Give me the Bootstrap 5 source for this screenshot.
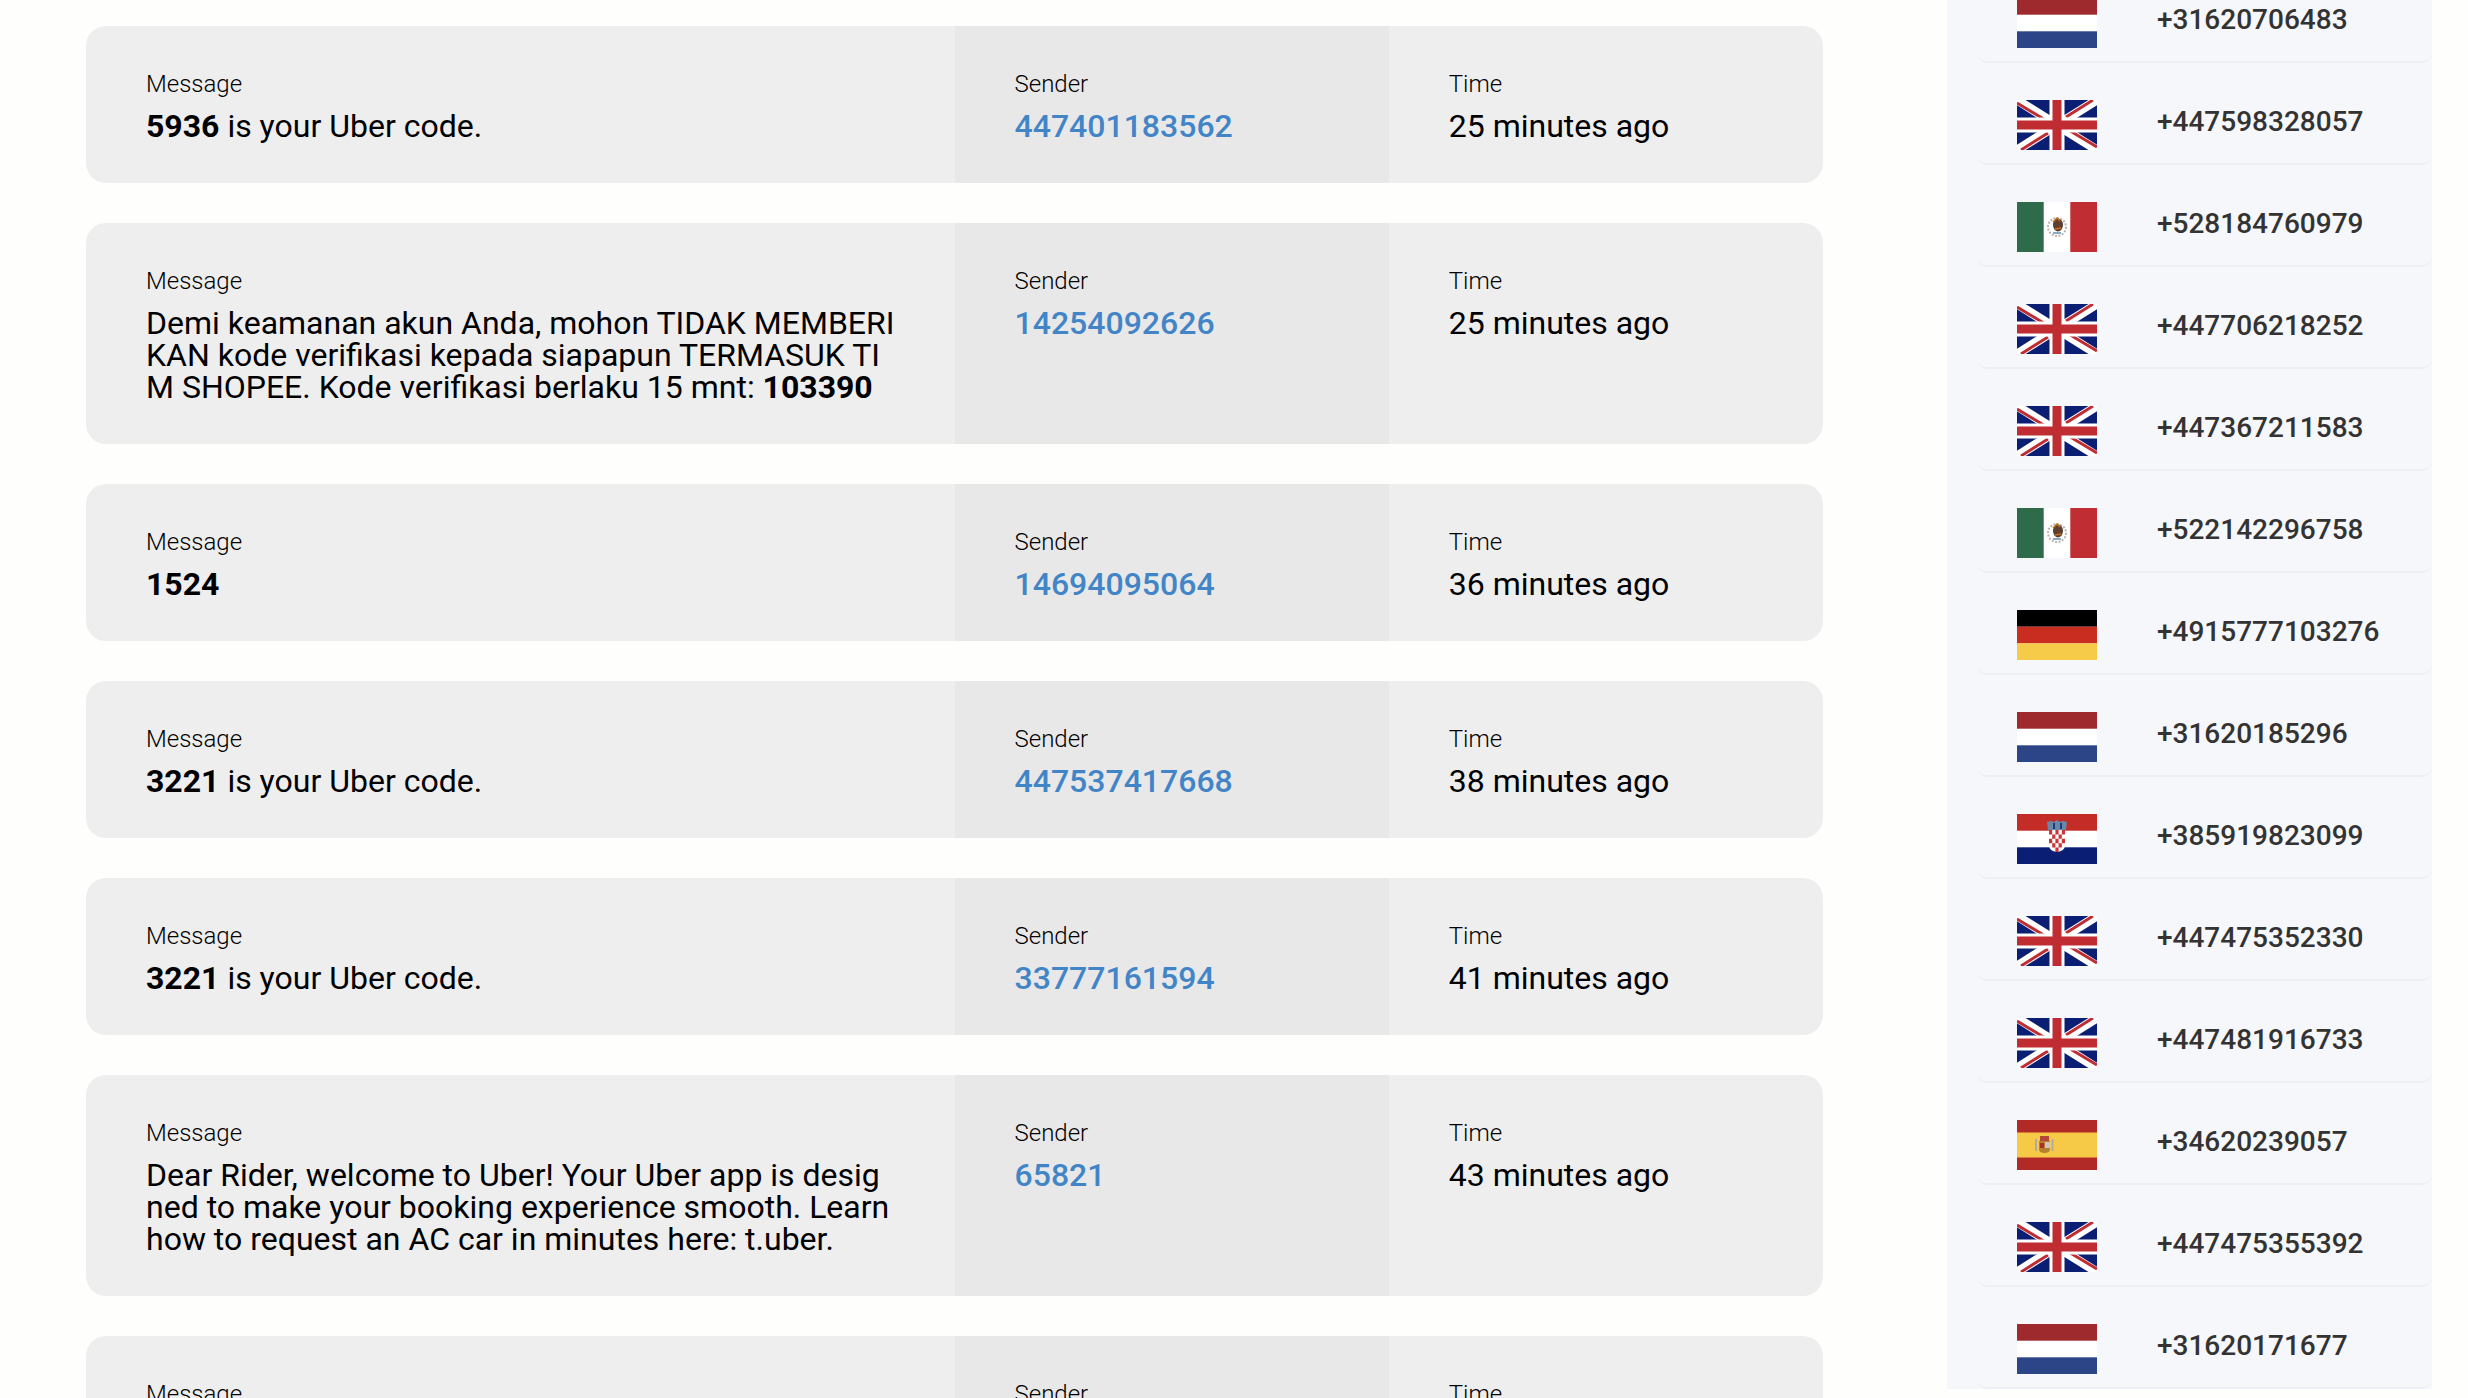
<!DOCTYPE html>
<html lang="en">
  <head>
    <meta charset="UTF-8" />
    <meta name="viewport" content="width=device-width, initial-scale=1.0" />
    <title>Messages</title>
    <link href="https://cdn.jsdelivr.net/npm/bootstrap@5.3.2/dist/css/bootstrap.min.css" rel="stylesheet" />
    <style>
      body { background: #fefefd; font-family: Roboto, "Liberation Sans", sans-serif; color: #000; }
      .page-wrap { height: 100vh; }
      .sms-col { width: 1947px; padding: 26px 124px 0 86px; }
      .sms-item { margin-bottom: 40px; background: #eeeeef; border-radius: 20px; }
      .sms-cell { padding: 40px 60px 41px; }
      .sms-sender { background: #e8e8e9; }
      .sms-label { font-size: 24px; line-height: 36px; font-weight: 300; margin-bottom: 8px; }
      .sms-value { font-size: 32px; line-height: 32px; word-break: break-all; }
      .sms-value b { font-weight: 700; }
      .sms-value a { color: #4285c7; font-weight: 500; text-decoration: none; }
      .num-panel { width: 485px; height: 1389px; background: #f6f7fb; padding-left: 30px; }
      .num-row { flex: 0 0 102px; padding: 37px 0 0 40px; border-bottom: 2px solid #eeeff4; border-radius: 0 0 10px 10px; }
      .num-row svg { width: 80px; height: 50px; flex: none; display: block; }
      .num-row a { margin-left: 60px; font-size: 28px; line-height: 44px; font-weight: 500; color: #333; text-decoration: none; }
    </style>
  </head>
  <body>
    <svg width="0" height="0" class="position-absolute">
      <defs>
        <symbol id="flag-nl" viewBox="0 0 80 50">
          <rect width="80" height="50" fill="#fff" />
          <rect width="80" height="16.7" fill="#9f2a2d" />
          <rect y="33.3" width="80" height="16.7" fill="#2b4587" />
        </symbol>
        <symbol id="flag-uk" viewBox="0 0 80 50">
          <rect width="80" height="50" fill="#0a1f73" />
          <path d="M0 0L80 50M80 0L0 50" stroke="#fff" stroke-width="9" />
          <path d="M0 3L30 21M76 0L49 17M80 47L50 29M4 50L31 33" stroke="#bf2d33" stroke-width="3" />
          <path d="M40 0V50M0 25H80" stroke="#fff" stroke-width="15" />
          <path d="M40 0V50M0 25H80" stroke="#bf2d33" stroke-width="9" />
        </symbol>
        <symbol id="flag-mx" viewBox="0 0 80 50">
          <rect width="80" height="50" fill="#fff" />
          <rect width="26.7" height="50" fill="#2e6b4b" />
          <rect x="53.3" width="26.7" height="50" fill="#c02d32" />
          <circle cx="40" cy="25" r="9" fill="none" stroke="#b9b5b0" stroke-width="2" stroke-dasharray="2 1.5" />
          <ellipse cx="41" cy="23" rx="5" ry="6.5" fill="#5d4030" />
          <path d="M36 20l4-4 3 3M38 27l6-1" stroke="#c8701e" stroke-width="1.5" fill="none" />
          <path d="M36 31h8" stroke="#5f8fb0" stroke-width="1.5" />
        </symbol>
        <symbol id="flag-de" viewBox="0 0 80 50">
          <rect width="80" height="16.7" fill="#000" />
          <rect y="16.7" width="80" height="16.7" fill="#c82d20" />
          <rect y="33.3" width="80" height="16.7" fill="#f6cb49" />
        </symbol>
        <symbol id="flag-hr" viewBox="0 0 80 50">
          <rect width="80" height="50" fill="#fff" />
          <rect width="80" height="16.7" fill="#c42d27" />
          <rect y="33.3" width="80" height="16.7" fill="#0a1f73" />
          <path d="M30 8l4-1 3 1 3-2 3 2 3-1 4 1-1 8H31z" fill="#6b87a8" />
          <path d="M36 9h2v6h-2zM43 9h2v6h-2z" fill="#1c3a80" />
          <path d="M32 16h16v15q0 6-8 7q-8-1-8-7z" fill="#fff" />
          <path d="M32 16h3.2v4.4H32zM38.4 16h3.2v4.4h-3.2zM44.8 16H48v4.4h-3.2zM35.2 20.4h3.2v4.4h-3.2zM41.6 20.4h3.2v4.4h-3.2zM32 24.8h3.2v4.4H32zM38.4 24.8h3.2v4.4h-3.2zM44.8 24.8H48v4.4h-3.2zM35.2 29.2h3.2v4.4h-3.2zM41.6 29.2h3.2v4.4h-3.2zM38.4 33.6h3.2V38h-3.2z" fill="#c9353a" />
        </symbol>
        <symbol id="flag-es" viewBox="0 0 80 50">
          <rect width="80" height="50" fill="#b22a28" />
          <rect y="12.5" width="80" height="25" fill="#f6ca46" />
          <path d="M22 21h11v8q0 4-5.500 4q-5.500 0-5.500-4z" fill="#b5812e" />
          <path d="M23 16h9v5h-9z" fill="#b5463a" />
          <path d="M28 22h5v6h-5z" fill="#c9c5c8" />
          <path d="M23 23h4v5h-4z" fill="#a8312c" />
          <path d="M19 19v12M35.500 19v12" stroke="#b0a9a8" stroke-width="2" />
        </symbol>
      </defs>
    </svg>

    <div class="page-wrap d-flex align-items-start overflow-hidden">
      <main class="sms-col flex-shrink-0">
        <div class="row g-0 sms-item overflow-hidden">
          <div class="col-6 sms-cell"><div class="sms-label">Message</div><div class="sms-value"><b>5936</b> is your Uber code.</div></div>
          <div class="col-3 sms-cell sms-sender"><div class="sms-label">Sender</div><div class="sms-value"><a href="#">447401183562</a></div></div>
          <div class="col-3 sms-cell"><div class="sms-label">Time</div><div class="sms-value">25 minutes ago</div></div>
        </div>
        <div class="row g-0 sms-item overflow-hidden">
          <div class="col-6 sms-cell"><div class="sms-label">Message</div><div class="sms-value">Demi keamanan akun Anda, mohon TIDAK MEMBERIKAN kode verifikasi kepada siapapun TERMASUK TIM SHOPEE. Kode verifikasi berlaku 15 mnt: <b>103390</b></div></div>
          <div class="col-3 sms-cell sms-sender"><div class="sms-label">Sender</div><div class="sms-value"><a href="#">14254092626</a></div></div>
          <div class="col-3 sms-cell"><div class="sms-label">Time</div><div class="sms-value">25 minutes ago</div></div>
        </div>
        <div class="row g-0 sms-item overflow-hidden">
          <div class="col-6 sms-cell"><div class="sms-label">Message</div><div class="sms-value"><b>1524</b></div></div>
          <div class="col-3 sms-cell sms-sender"><div class="sms-label">Sender</div><div class="sms-value"><a href="#">14694095064</a></div></div>
          <div class="col-3 sms-cell"><div class="sms-label">Time</div><div class="sms-value">36 minutes ago</div></div>
        </div>
        <div class="row g-0 sms-item overflow-hidden">
          <div class="col-6 sms-cell"><div class="sms-label">Message</div><div class="sms-value"><b>3221</b> is your Uber code.</div></div>
          <div class="col-3 sms-cell sms-sender"><div class="sms-label">Sender</div><div class="sms-value"><a href="#">447537417668</a></div></div>
          <div class="col-3 sms-cell"><div class="sms-label">Time</div><div class="sms-value">38 minutes ago</div></div>
        </div>
        <div class="row g-0 sms-item overflow-hidden">
          <div class="col-6 sms-cell"><div class="sms-label">Message</div><div class="sms-value"><b>3221</b> is your Uber code.</div></div>
          <div class="col-3 sms-cell sms-sender"><div class="sms-label">Sender</div><div class="sms-value"><a href="#">33777161594</a></div></div>
          <div class="col-3 sms-cell"><div class="sms-label">Time</div><div class="sms-value">41 minutes ago</div></div>
        </div>
        <div class="row g-0 sms-item overflow-hidden">
          <div class="col-6 sms-cell"><div class="sms-label">Message</div><div class="sms-value">Dear Rider, welcome to Uber! Your Uber app is designed to make your booking experience smooth. Learn how to request an AC car in minutes here: t.uber.</div></div>
          <div class="col-3 sms-cell sms-sender"><div class="sms-label">Sender</div><div class="sms-value"><a href="#">65821</a></div></div>
          <div class="col-3 sms-cell"><div class="sms-label">Time</div><div class="sms-value">43 minutes ago</div></div>
        </div>
        <div class="row g-0 sms-item overflow-hidden">
          <div class="col-6 sms-cell"><div class="sms-label">Message</div></div>
          <div class="col-3 sms-cell sms-sender"><div class="sms-label">Sender</div></div>
          <div class="col-3 sms-cell"><div class="sms-label">Time</div></div>
        </div>
      </main>

      <aside class="num-panel d-flex flex-column justify-content-end overflow-hidden flex-shrink-0">
        <div class="num-row d-flex align-items-start"><svg><use href="#flag-nl" /></svg><a href="#">+31620706483</a></div>
        <div class="num-row d-flex align-items-start"><svg><use href="#flag-uk" /></svg><a href="#">+447598328057</a></div>
        <div class="num-row d-flex align-items-start"><svg><use href="#flag-mx" /></svg><a href="#">+528184760979</a></div>
        <div class="num-row d-flex align-items-start"><svg><use href="#flag-uk" /></svg><a href="#">+447706218252</a></div>
        <div class="num-row d-flex align-items-start"><svg><use href="#flag-uk" /></svg><a href="#">+447367211583</a></div>
        <div class="num-row d-flex align-items-start"><svg><use href="#flag-mx" /></svg><a href="#">+522142296758</a></div>
        <div class="num-row d-flex align-items-start"><svg><use href="#flag-de" /></svg><a href="#">+4915777103276</a></div>
        <div class="num-row d-flex align-items-start"><svg><use href="#flag-nl" /></svg><a href="#">+31620185296</a></div>
        <div class="num-row d-flex align-items-start"><svg><use href="#flag-hr" /></svg><a href="#">+385919823099</a></div>
        <div class="num-row d-flex align-items-start"><svg><use href="#flag-uk" /></svg><a href="#">+447475352330</a></div>
        <div class="num-row d-flex align-items-start"><svg><use href="#flag-uk" /></svg><a href="#">+447481916733</a></div>
        <div class="num-row d-flex align-items-start"><svg><use href="#flag-es" /></svg><a href="#">+34620239057</a></div>
        <div class="num-row d-flex align-items-start"><svg><use href="#flag-uk" /></svg><a href="#">+447475355392</a></div>
        <div class="num-row d-flex align-items-start"><svg><use href="#flag-nl" /></svg><a href="#">+31620171677</a></div>
      </aside>
    </div>

    <script src="https://cdn.jsdelivr.net/npm/bootstrap@5.3.2/dist/js/bootstrap.bundle.min.js"></script>
  </body>
</html>
